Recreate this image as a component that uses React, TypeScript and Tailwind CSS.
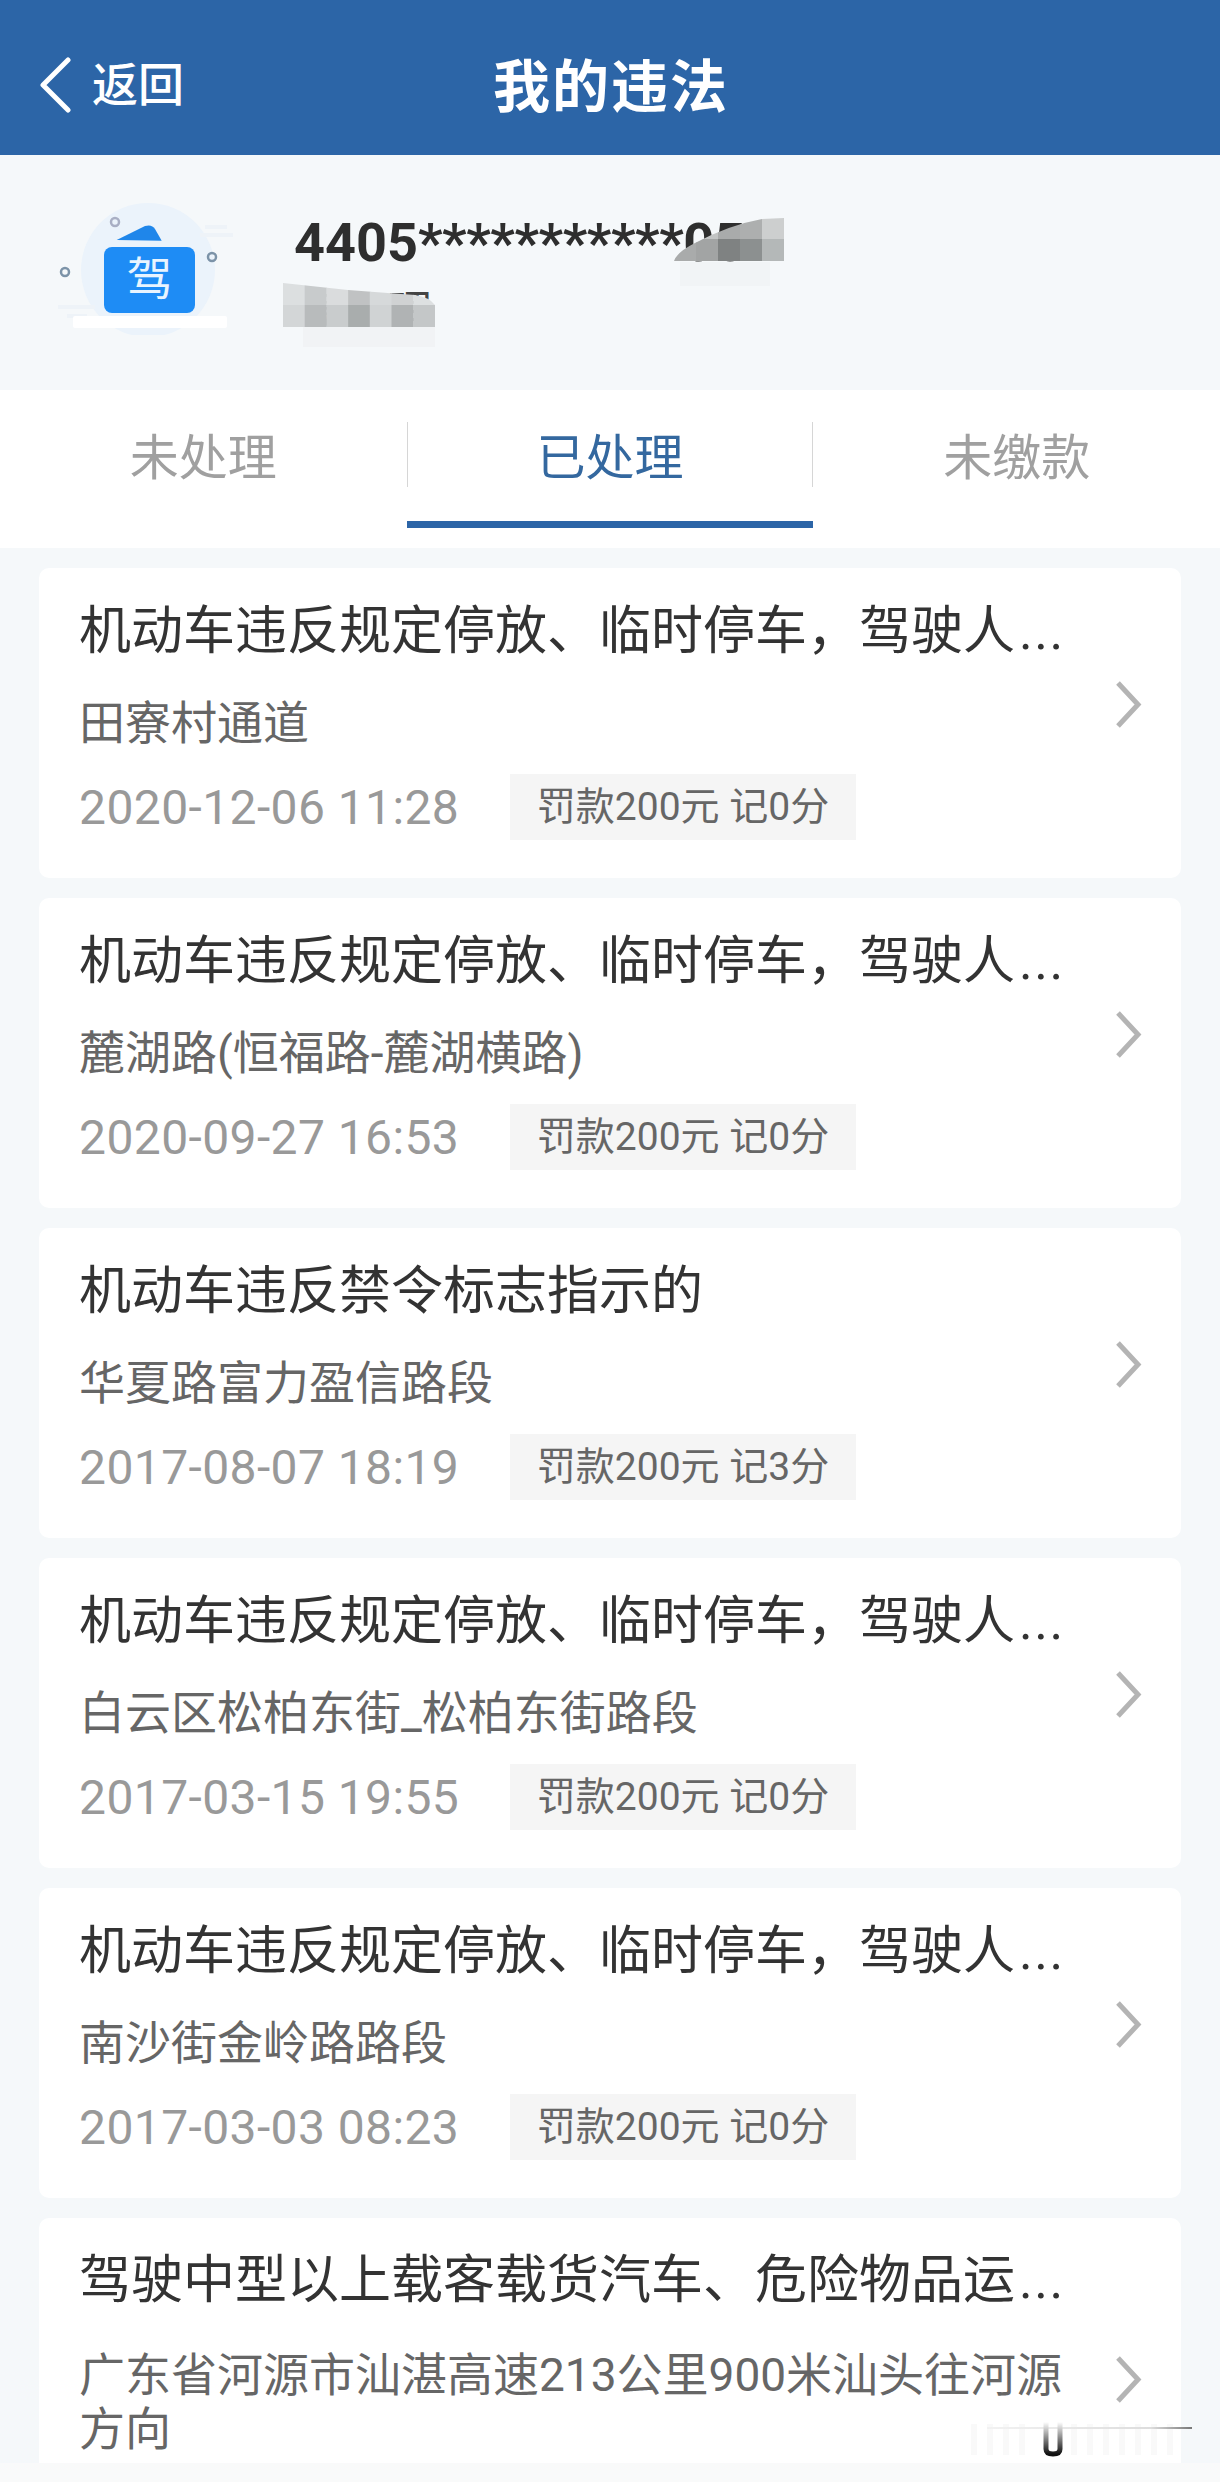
import React from "react";

const items = [
  { t: "机动车违反规定停放、临时停车，驾驶人", l: "田寮村通道", d: "2020-12-06 11:28", f: "罚款200元 记0分" },
  { t: "机动车违反规定停放、临时停车，驾驶人", l: "麓湖路(恒福路-麓湖横路)", d: "2020-09-27 16:53", f: "罚款200元 记0分" },
  { t: "机动车违反禁令标志指示的", l: "华夏路富力盈信路段", d: "2017-08-07 18:19", f: "罚款200元 记3分", full: true },
  { t: "机动车违反规定停放、临时停车，驾驶人", l: "白云区松柏东街_松柏东街路段", d: "2017-03-15 19:55", f: "罚款200元 记0分" },
  { t: "机动车违反规定停放、临时停车，驾驶人", l: "南沙街金岭路路段", d: "2017-03-03 08:23", f: "罚款200元 记0分" },
];

function Chevron() {
  return (
    <svg width="27" height="47" viewBox="0 0 27 47" fill="none" className="shrink-0">
      <path d="M3 2 L23 23.5 L3 45" stroke="#b4b4b4" strokeWidth="5" />
    </svg>
  );
}

function DriverIcon() {
  return (
    <svg width="180" height="140" viewBox="0 0 180 140" className="shrink-0">
      <circle cx="93" cy="75" r="67" fill="#ebf3fb" />
      <path d="M150 32 H172 M145 40 H178 M3 112 H40 M12 121 H32" stroke="#eef3f8" strokeWidth="4" />
      <path d="M61.7 45 L90 31 Q97 29 100 34 L106.7 45.7 Z" fill="#1f86ea" />
      <rect x="49" y="52" width="91" height="66" rx="8" fill="#1e8cf5" />
      <text x="94.5" y="100" textAnchor="middle" fontSize="46" fill="#e8f4ff" fontFamily="'Noto Sans CJK SC',sans-serif">驾</text>
      <circle cx="60" cy="27" r="4" fill="none" stroke="#a9afc4" strokeWidth="2.5" />
      <circle cx="157" cy="62" r="4" fill="none" stroke="#7c93a8" strokeWidth="2.5" />
      <circle cx="10" cy="77" r="4" fill="none" stroke="#7c93a8" strokeWidth="2.5" />
      <rect x="18" y="121" width="154" height="12" rx="2" fill="#ffffff" />
    </svg>
  );
}

function MosaicTop() {
  const r1 = ["#dfe2e3", "#c2c4c4", "#a9abab", "#adafaf", "#cdcfcf"];
  const r2 = ["#a9abab", "#a2a4a4", "#7f8282", "#8c9090", "#b4b8b8"];
  return (
    <svg width="110" height="70" className="absolute left-[674px] top-[63px]">
      <rect x="6" y="44" width="90" height="24" fill="#f1f4f6" />
      <clipPath id="mt">
        <path d="M0 43 Q3 34 21 25 Q55 7 88 1 L110 0 V43 Z" />
      </clipPath>
      <g clipPath="url(#mt)">
        {r1.map((c, i) => <rect key={i} x={i * 22} y="0" width="22.5" height="21.5" fill={c} />)}
        {r2.map((c, i) => <rect key={i} x={i * 22} y="21" width="22.5" height="22" fill={c} />)}
      </g>
    </svg>
  );
}

function MosaicBottom() {
  const r1 = ["#dcdfe0", "#c8cbcc", "#dadcdd", "#c0c2c3", "#d6d9da", "#d0d2d3", "#dde0e1"];
  const r2 = ["#d3d6d7", "#b8bbbc", "#c9cccd", "#a9adad", "#d0d3d4", "#b0b3b4", "#c4c7c8"];
  return (
    <svg width="152" height="66" className="absolute left-[283px] top-[128px]">
      <rect x="20" y="44" width="132" height="20" fill="#f1f3f5" />
      <clipPath id="mb">
        <path d="M0 0 L65 7 L118 11 L132 12 Q146 14 152 22 V44 H0 Z" />
      </clipPath>
      <g clipPath="url(#mb)">
        {r1.map((c, i) => <rect key={i} x={i * 21.7} y="0" width="22.2" height="22.5" fill={c} />)}
        {r2.map((c, i) => <rect key={i} x={i * 21.7} y="22" width="22.2" height="22" fill={c} />)}
      </g>
    </svg>
  );
}

function Title({ t, full }: { t: string; full?: boolean }) {
  return (
    <div className="h-[72px] whitespace-nowrap text-[52px] leading-[72px] text-[#333333]">
      {t}
      {full ? null : <span className="ml-[4px] tracking-[1.5px]">...</span>}
    </div>
  );
}

function Card({ t, l, d, f, full }: { t: string; l: string; d: string; f: string; full?: boolean }) {
  return (
    <div className="flex h-[310px] items-center justify-between rounded-[10px] bg-white pl-[40px] pr-[39px]">
      <div className="w-[990px] self-start pt-[28px]">
        <Title t={t} full={full} />
        <div className="mt-[28px] h-[55px] truncate text-[46px] leading-[55px] text-[#666666]">{l}</div>
        <div className="mt-[21px] flex items-center">
          <span className="w-[431px] pt-[3px] text-[48px] leading-[66px] tracking-[0.4px] text-[#999999]">{d}</span>
          <span className="flex h-[66px] w-[346px] items-center justify-center bg-[#f5f5f5] pt-[2px] text-[39px] text-[#666666]">{f}</span>
        </div>
      </div>
      <div className="mb-[38px]">
        <Chevron />
      </div>
    </div>
  );
}

export default function App() {
  return (
    <div className="relative h-[2482px] w-[1220px] overflow-hidden bg-[#f5f8fa] font-[Roboto,'Noto_Sans_CJK_SC',sans-serif]">
      <header className="grid h-[155px] grid-cols-[1fr_auto_1fr] items-center bg-[#2c65a7] pt-[14px] text-white">
        <div className="flex items-center pl-[38px]">
          <svg width="34" height="56" viewBox="0 0 34 56" fill="none" className="mr-[20px]">
            <path d="M30 3 L5 28 L30 53" stroke="#ffffff" strokeWidth="5" strokeLinecap="round" strokeLinejoin="round" />
          </svg>
          <span className="text-[46px] font-medium leading-none">返回</span>
        </div>
        <div className="pl-[2px] pt-[5px] text-[57px] font-bold leading-none tracking-[2px]">我的违法</div>
        <div />
      </header>

      <section className="relative flex h-[235px] items-start pl-[55px] pt-[40px]">
        <DriverIcon />
        <div className="ml-[59px] pt-[18px] text-[54px] font-bold leading-[60px] text-[#2e2e2e]">
          4405<span className="tracking-[-0.4px]">***********</span>05
        </div>
        <div className="absolute left-[300px] top-[130px] flex w-[132px] justify-between text-[44px] leading-[56px] text-[#444444]">
          <span>模</span>
          <span>理</span>
        </div>
        <MosaicTop />
        <MosaicBottom />
      </section>

      <nav className="grid h-[158px] grid-cols-3 items-start bg-white text-[49px] leading-none">
        <div className="flex h-[138px] items-center justify-center pb-[2px] text-[#a0a0a0]">未处理</div>
        <div className="relative flex h-[138px] items-center justify-center border-b-[7px] border-[#2c65a7] pt-[6px] text-[#34689f]">
          已处理
          <span className="absolute left-0 top-[32px] h-[65px] w-px bg-[#d6d6d6]" />
          <span className="absolute right-0 top-[32px] h-[65px] w-px bg-[#d6d6d6]" />
        </div>
        <div className="flex h-[138px] items-center justify-center pb-[2px] text-[#a0a0a0]">未缴款</div>
      </nav>

      <main className="flex flex-col gap-[20px] px-[39px] pt-[20px]">
        {items.map((it, i) => (
          <Card key={i} {...it} />
        ))}
        <div className="flex h-[330px] items-start justify-between rounded-[10px] bg-white pl-[40px] pr-[39px]">
          <div className="w-[1000px] pt-[27px]">
            <Title t="驾驶中型以上载客载货汽车、危险物品运" />
            <div className="mt-[31px] text-[46px] leading-[54px] text-[#666666]">广东省河源市汕湛高速213公里900米汕头往河源方向</div>
          </div>
          <div className="pt-[138px]">
            <Chevron />
          </div>
        </div>
      </main>

      <div className="absolute bottom-0 left-0 h-[19px] w-full bg-[#f9fafa]" />
      <svg width="240" height="50" className="absolute left-[960px] top-[2412px]">
        <defs>
          <linearGradient id="u" x1="0" y1="0" x2="0" y2="1">
            <stop offset="0" stopColor="#ffffff" />
            <stop offset="1" stopColor="#111111" />
          </linearGradient>
          <linearGradient id="line" x1="0" y1="0" x2="1" y2="0">
            <stop offset="0" stopColor="#f2f2f2" />
            <stop offset="0.8" stopColor="#dddddd" />
            <stop offset="1" stopColor="#777777" />
          </linearGradient>
        </defs>
        <path d="M14 12 V43 M30 12 V43 M46 12 V43 M62 12 V43 M114 12 V43 M130 12 V43 M146 12 V43 M162 12 V43 M178 12 V43 M194 12 V43 M210 12 V43" stroke="#f9f9f9" strokeWidth="6" />
        <rect x="27" y="15" width="205" height="2" fill="url(#line)" />
        <path d="M86 10 V37 Q86 42 93 42 Q100 42 100 37 V10" fill="none" stroke="url(#u)" strokeWidth="5" />
      </svg>
    </div>
  );
}
